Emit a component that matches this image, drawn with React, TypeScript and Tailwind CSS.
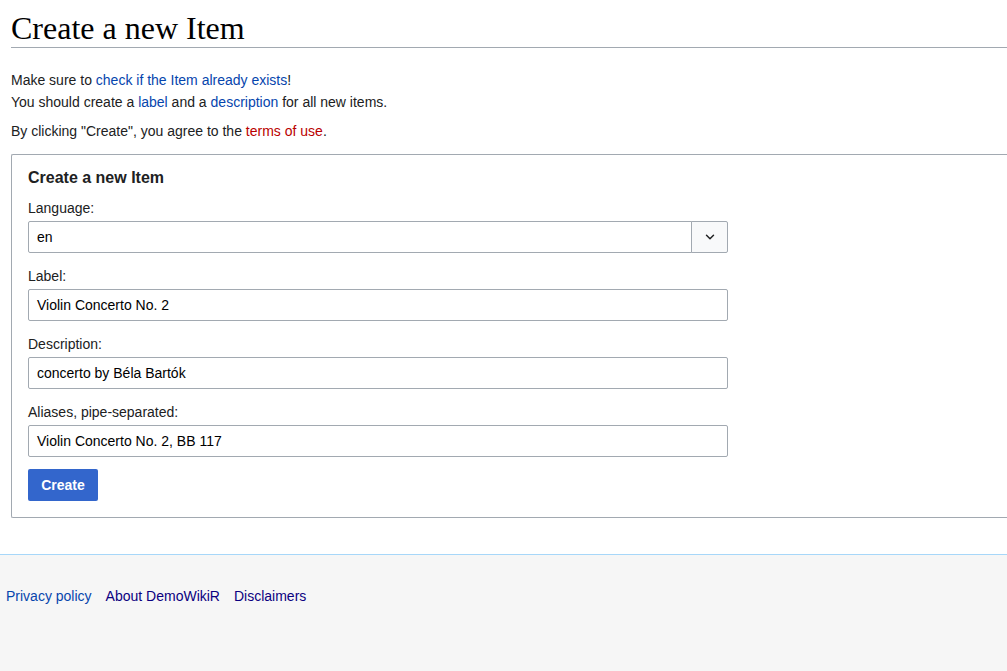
import { ChevronDown } from 'lucide-react';

const sans = { fontFamily: '"Liberation Sans", Arial, sans-serif' };

function Field({ label, value, select }: { label: string; value: string; select?: boolean }) {
  return (
    <div className={select ? 'mt-[10px]' : 'mt-[13px]'}>
      <div className="h-[20px] leading-[20px] text-[14px] text-[#202122]">{label}</div>
      <div className="mt-[3px] flex w-[700px] h-[32px]">
        <div
          className={`flex-1 h-full border border-[#a2a9b1] bg-white px-[8px] flex items-center text-[14px] text-black ${
            select ? 'rounded-l-[2px]' : 'rounded-[2px]'
          }`}
        >
          {value}
        </div>
        {select && (
          <div className="w-[37px] h-full -ml-px border border-[#a2a9b1] rounded-r-[2px] bg-[#f8f9fa] flex items-center justify-center">
            <ChevronDown size={14} strokeWidth={2.5} className="text-[#202122]" />
          </div>
        )}
      </div>
    </div>
  );
}

export default function App() {
  return (
    <div className="min-h-[671px] flex flex-col bg-white" style={sans}>
      <div className="pl-[11px] pt-[10px] pb-[36px]">
        <h1
          className="text-[32px] leading-[37px] text-black border-b border-[#a2a9b1] mb-[21px]"
          style={{ fontFamily: '"Liberation Serif", Georgia, serif' }}
        >
          Create a new Item
        </h1>

        <div className="text-[14px] leading-[22px] text-[#202122]">
          <p>
            Make sure to <a className="text-[#0645ad]">check if the Item already exists</a>!
          </p>
          <p>
            You should create a <a className="text-[#0645ad]">label</a> and a{' '}
            <a className="text-[#0645ad]">description</a> for all new items.
          </p>
          <p className="mt-[7px]">
            By clicking "Create", you agree to the <a className="text-[#ba0000]">terms of use</a>.
          </p>
        </div>

        <div className="mt-[12px] border border-r-0 border-[#a2a9b1] rounded-l-[2px] pl-[16px] pt-[13px] pb-[16px]">
          <div className="text-[16px] leading-[20px] font-bold text-[#202122]">Create a new Item</div>
          <Field label="Language:" value="en" select />
          <Field label="Label:" value="Violin Concerto No. 2" />
          <Field label="Description:" value="concerto by Béla Bartók" />
          <Field label="Aliases, pipe-separated:" value="Violin Concerto No. 2, BB 117" />
          <button className="mt-[12px] h-[32px] w-[70px] rounded-[2px] bg-[#36c] text-white text-[14px] font-bold">
            Create
          </button>
        </div>
      </div>

      <footer className="flex-1 border-t border-[#a7d7f9] bg-[#f6f6f6] pl-[6px] pt-[31px]">
        <div className="flex gap-[14px] text-[14px] leading-[20px]">
          <a className="text-[#0645ad]">Privacy policy</a>
          <a className="text-[#0b0080]">About DemoWikiR</a>
          <a className="text-[#0b0080]">Disclaimers</a>
        </div>
      </footer>
    </div>
  );
}
